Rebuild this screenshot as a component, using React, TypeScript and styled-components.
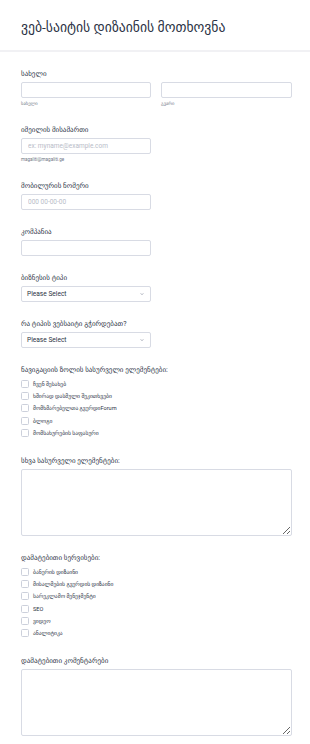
import React from "react";
import styled, { createGlobalStyle } from "styled-components";

const GlobalStyle = createGlobalStyle`
  html, body {
    margin: 0;
    padding: 0;
    background: #ffffff;
  }
  body {
    font-family: Roboto, "DejaVu Sans", sans-serif;
    color: #2c3345;
  }
`;

const Page = styled.div`
  width: 310px;
  background: #ffffff;
`;

const Header = styled.header`
  height: 50px;
  padding: 0 21px;
  display: flex;
  align-items: center;
  border-bottom: 2px solid #f1f1f4;
`;

const Title = styled.h1`
  margin: 0;
  padding-top: 4px;
  font-size: 13.7px;
  font-weight: 400;
  color: #2c3345;
`;

const Form = styled.form`
  display: flex;
  flex-direction: column;
  gap: 17px;
  padding: 17px 18px 20px 21px;
`;

const Field = styled.div`
  display: flex;
  flex-direction: column;
  gap: 3px;
`;

const Label = styled.label`
  font-size: 7px;
  line-height: 10px;
  color: #2c3345;
`;

const Row = styled.div`
  display: grid;
  grid-template-columns: 130px 131px;
  column-gap: 10px;
`;

const Column = styled.div`
  display: flex;
  flex-direction: column;
  gap: 2px;
`;

const Input = styled.input<{ $wide?: boolean }>`
  box-sizing: border-box;
  width: ${(p) => (p.$wide ? "100%" : "130px")};
  height: 16px;
  margin: 0;
  padding: 0 6px;
  border: 1px solid #d8dbe4;
  border-radius: 2px;
  background: #fff;
  font-family: Roboto, "DejaVu Sans", sans-serif;
  font-size: 6.5px;
  color: #2c3345;
  outline: none;
  &::placeholder {
    color: #b8bcc8;
  }
`;

const SubLabel = styled.span`
  font-size: 4.6px;
  line-height: 8px;
  color: #6f7685;
`;

const SelectBox = styled.div`
  box-sizing: border-box;
  width: 130px;
  height: 16px;
  padding: 0 6px 0 5px;
  display: flex;
  align-items: center;
  justify-content: space-between;
  border: 1px solid #d8dbe4;
  border-radius: 2px;
  font-size: 6.6px;
  font-weight: 400;
  color: #2c3345;
`;

const Chevron = styled.svg`
  width: 4px;
  height: 4px;
  color: #8a90a0;
`;

const CheckList = styled.div`
  display: flex;
  flex-direction: column;
`;

const CheckItem = styled.label`
  display: flex;
  align-items: center;
  gap: 4px;
  height: 12.2px;
  font-size: 5.6px;
  color: #2c3345;
`;

const Box = styled.span`
  box-sizing: border-box;
  width: 8px;
  height: 8px;
  flex: none;
  border: 1px solid #ccd0db;
  border-radius: 1.5px;
  background: #fff;
`;

const TextArea = styled.textarea`
  box-sizing: border-box;
  width: 271px;
  height: 67px;
  margin: 0;
  padding: 4px;
  border: 1px solid #d8dbe4;
  border-radius: 2px;
  font-family: Roboto, "DejaVu Sans", sans-serif;
  font-size: 7px;
  outline: none;
`;

const Select = ({ value }: { value: string }) => (
  <SelectBox>
    <span>{value}</span>
    <Chevron viewBox="0 0 10 10" fill="none">
      <path d="M1.5 3 5 7 8.5 3" stroke="currentColor" strokeWidth="1.5" />
    </Chevron>
  </SelectBox>
);

const CheckGroup = ({ items }: { items: string[] }) => (
  <CheckList>
    {items.map((item) => (
      <CheckItem key={item}>
        <Box />
        {item}
      </CheckItem>
    ))}
  </CheckList>
);

const navItems = [
  "ჩვენ შესახებ",
  "ხშირად დასმული შეკითხვები",
  "მომხმარებელთა გვერდიForum",
  "ბლოგი",
  "მომსახურების საფასური",
];

const serviceItems = [
  "ბანერის დიზაინი",
  "მისალმების გვერდის დიზაინი",
  "სარეკლამო მენეჯმენტი",
  "SEO",
  "ვიდეო",
  "ანალიტიკა",
];

export default function App() {
  return (
    <Page>
      <GlobalStyle />
      <Header>
        <Title>ვებ-საიტის დიზაინის მოთხოვნა</Title>
      </Header>
      <Form>
        <Field>
          <Label>სახელი</Label>
          <Row>
            <Column>
              <Input $wide />
              <SubLabel>სახელი</SubLabel>
            </Column>
            <Column>
              <Input $wide />
              <SubLabel>გვარი</SubLabel>
            </Column>
          </Row>
        </Field>
        <Field>
          <Label>იმეილის მისამართი</Label>
          <Column>
            <Input placeholder="ex: myname@example.com" />
            <SubLabel>magaliti@magaliti.ge</SubLabel>
          </Column>
        </Field>
        <Field>
          <Label>მობილურის ნომერი</Label>
          <Input placeholder="000 00-00-00" />
        </Field>
        <Field>
          <Label>კომპანია</Label>
          <Input />
        </Field>
        <Field>
          <Label>ბიზნესის ტიპი</Label>
          <Select value="Please Select" />
        </Field>
        <Field>
          <Label>რა ტიპის ვებსაიტი გჭირდებათ?</Label>
          <Select value="Please Select" />
        </Field>
        <Field>
          <Label>ნავიგაციის ზოლის სასურველი ელემენტები:</Label>
          <CheckGroup items={navItems} />
        </Field>
        <Field>
          <Label>სხვა სასურველი ელემენტები:</Label>
          <TextArea />
        </Field>
        <Field>
          <Label>დამატებითი სერვისები:</Label>
          <CheckGroup items={serviceItems} />
        </Field>
        <Field>
          <Label>დამატებითი კომენტარები</Label>
          <TextArea />
        </Field>
      </Form>
    </Page>
  );
}
